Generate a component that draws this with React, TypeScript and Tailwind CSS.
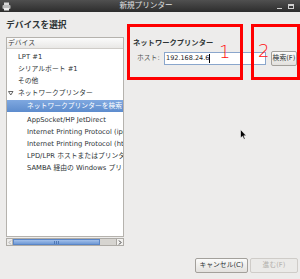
export default function App() {
  const row = "h-[12px] leading-[12px] whitespace-nowrap";
  return (
    <div className="relative w-[300px] h-[279px] overflow-hidden bg-[#edeceb] text-[#2e3436] flex flex-col font-['DejaVu_Sans','Noto_Sans_CJK_JP',sans-serif] text-[6.8px]">
      {/* title bar */}
      <div className="h-[12px] flex items-center bg-linear-to-b from-[#505050] to-[#2d2d2d] text-[#e2e2e2]">
        <div className="ml-[2px] w-[9px] h-[9px]">
          <svg width="9" height="9" viewBox="0 0 9 9">
            <rect x="2" y="0.5" width="5" height="3" fill="#d8d8d8" />
            <rect x="0.5" y="3" width="8" height="4" rx="1" fill="#bcbcbc" />
            <rect x="2" y="6" width="5" height="2.5" fill="#eeeeee" />
          </svg>
        </div>
        <div className="flex-1 text-center leading-[12px] text-[7.6px] pl-[4px]">新規プリンター</div>
        <div className="flex items-center gap-[6px] mr-[6px]">
          <div className="w-[5px] h-[1px] mt-[4px] bg-[#cfcfcf]" />
          <div className="w-[6px] h-[5px] border border-[#cfcfcf] border-t-2" />
        </div>
      </div>

      {/* body */}
      <div className="h-[234px] flex">
        {/* left column */}
        <div className="ml-[6px] w-[118px] flex flex-col">
          <div className="pt-[7px] mb-[6px] leading-[12px] text-[8.7px] font-bold whitespace-nowrap">デバイスを選択</div>
          <div className="h-[200px] border border-[#b5b2ad] bg-white flex flex-col overflow-hidden">
            <div className="h-[11px] leading-[11px] border-b border-[#cfccc8] bg-linear-to-b from-[#fbfbfb] to-[#e9e8e6] pl-[1px] text-[#3a3a3a]">デバイス</div>
            <div className="mt-[2px] flex flex-col">
              <div className={`${row} pl-[11px]`}>LPT #1</div>
              <div className={`${row} pl-[11px]`}>シリアルポート #1</div>
              <div className={`${row} pl-[11px]`}>その他</div>
              <div className={`${row} flex items-center`}>
                <svg width="11" height="12" viewBox="0 0 11 12" className="shrink-0">
                  <path d="M1.5 4.5 L6 4.5 L3.75 8 Z" fill="none" stroke="#555" strokeWidth="0.9" />
                </svg>
                <span>ネットワークプリンター</span>
              </div>
              <div className={`${row} mt-[1px] pl-[20px] bg-linear-to-b from-[#7fa8e0] to-[#5d8ccd] text-white`}>ネットワークプリンターを検索</div>
              <div className="mt-[2px] flex flex-col">
                <div className={`${row} pl-[20px]`}>AppSocket/HP JetDirect</div>
                <div className={`${row} pl-[20px]`}>Internet Printing Protocol (ipp)</div>
                <div className={`${row} pl-[20px]`}>Internet Printing Protocol (https)</div>
                <div className={`${row} pl-[20px]`}>LPD/LPR ホストまたはプリンター</div>
                <div className={`${row} pl-[20px]`}>SAMBA 経由の Windows プリンター</div>
              </div>
            </div>
          </div>
          {/* scrollbar */}
          <div className="mt-[1px] h-[8px] flex border border-[#aeaba6] bg-[#d6d4d0]">
            <div className="w-[6px] bg-[#ecebe9] border-r border-[#b8b5b0] flex items-center justify-center">
              <svg width="4" height="5" viewBox="0 0 4 5">
                <path d="M3 0.5 L1 2.5 L3 4.5" fill="none" stroke="#a8a8a8" strokeWidth="0.9" />
              </svg>
            </div>
            <div className="w-[87px] bg-linear-to-b from-[#a3c0ea] to-[#6f99d5] border border-[#5b86c6] flex items-center justify-center gap-[1px]">
              <div className="w-[1px] h-[3px] bg-[#4f78b5]" />
              <div className="w-[1px] h-[3px] bg-[#4f78b5]" />
              <div className="w-[1px] h-[3px] bg-[#4f78b5]" />
            </div>
            <div className="flex-1" />
            <div className="w-[7px] bg-[#f2f1ef] border-l border-[#a9a6a1] flex items-center justify-center">
              <svg width="4" height="5" viewBox="0 0 4 5">
                <path d="M1 0.5 L3 2.5 L1 4.5" fill="none" stroke="#333" strokeWidth="1" />
              </svg>
            </div>
          </div>
        </div>

        {/* right panel */}
        <div className="ml-[9px] flex-1 pt-[26px] flex flex-col">
          <div className="leading-[10px] text-[7.3px] font-bold whitespace-nowrap">ネットワークプリンター</div>
          <div className="mt-[3px] h-[15px] flex items-center">
            <div className="ml-[4px] w-[27px] whitespace-nowrap text-[#555753]">ホスト:</div>
            <div className="w-[102px] h-[13px] border border-[#8aa6cc] bg-white flex items-center pl-[1px] text-[6.5px] text-[#222]">
              <span>192.168.24.6</span>
              <span className="w-[1px] h-[9px] bg-black" />
            </div>
            <div className="ml-[5px] w-[26px] h-[15px] border border-[#a3a09b] rounded-[2px] bg-linear-to-b from-[#fbfbfa] to-[#e3e1de] flex items-center justify-center whitespace-nowrap">検索(F)</div>
          </div>
        </div>
      </div>

      {/* footer */}
      <div className="flex-1 flex justify-end items-start pt-[12px] pr-[2px] gap-[2px]">
        <div className="w-[53px] h-[15px] border border-[#a3a09b] rounded-[2px] bg-linear-to-b from-[#fbfbfa] to-[#e3e1de] flex items-center justify-center whitespace-nowrap">キャンセル(C)</div>
        <div className="w-[48px] h-[15px] border border-[#cfccc8] rounded-[2px] bg-[#ebeae8] flex items-center justify-center whitespace-nowrap text-[#b3b1ad]">進む(F)</div>
      </div>

      {/* annotations */}
      <div className="absolute left-[127px] top-[24px] w-[116px] h-[56px] border-[3px] border-[#ff0000]" />
      <div className="absolute left-[251px] top-[24px] w-[49px] h-[56px] border-[3px] border-[#ff0000]" />
      <div className="absolute left-[219px] top-[42px] text-[18px] leading-[20px] font-extralight text-[#ff1010] font-['DejaVu_Sans',sans-serif]">1</div>
      <div className="absolute left-[258px] top-[41px] text-[18px] leading-[20px] font-extralight text-[#ff1010] font-['DejaVu_Sans',sans-serif]">2</div>
      <svg className="absolute left-[240px] top-[129px]" width="7" height="11" viewBox="0 0 7 11">
        <path d="M0.5 0.5 L0.5 9 L2.5 7.2 L4 10.3 L5.2 9.7 L3.8 6.8 L6.3 6.8 Z" fill="#000" stroke="#fff" strokeWidth="0.6" />
      </svg>
    </div>
  );
}
